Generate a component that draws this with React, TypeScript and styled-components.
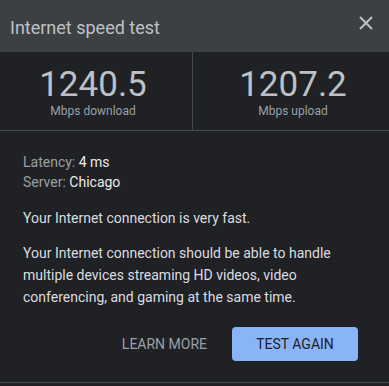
import React from "react";
import styled, { createGlobalStyle } from "styled-components";

const Global = createGlobalStyle`
  html, body {
    margin: 0;
    padding: 0;
    background: #202124;
  }
  body {
    font-family: Roboto, "Noto Sans", Arial, sans-serif;
    -webkit-font-smoothing: antialiased;
  }
`;

const Dialog = styled.div`
  width: 389px;
  background: #202124;
  display: flex;
  flex-direction: column;
  border-bottom: 1px solid #45484c;
`;

const Header = styled.header`
  height: 52px;
  box-sizing: border-box;
  background: #3c4043;
  display: flex;
  align-items: flex-start;
  justify-content: space-between;
  padding: 16px 16px 0 10px;
`;

const Title = styled.h1`
  margin: 0;
  font-size: 18px;
  line-height: 24px;
  font-weight: 400;
  color: #bdc1c6;
`;

const CloseButton = styled.button`
  border: 0;
  background: transparent;
  padding: 0;
  width: 14px;
  height: 14px;
  display: flex;
  cursor: pointer;
  color: #bdc1c6;
`;

const Stats = styled.div`
  display: grid;
  grid-template-columns: 193px 1fr;
  border-bottom: 1px solid #45484c;
`;

const Stat = styled.div<{ $divider?: boolean }>`
  display: flex;
  flex-direction: column;
  align-items: center;
  padding: 15px ${(p) => (p.$divider ? "6px" : "0")} 11px ${(p) => (p.$divider ? "0" : "4px")};
  border-right: ${(p) => (p.$divider ? "1px solid #45484c" : "none")};
`;

const Value = styled.div`
  font-size: 35px;
  line-height: 36px;
  color: #bdc1c6;
  font-weight: 400;
`;

const Unit = styled.div`
  font-size: 12px;
  line-height: 16px;
  color: #9aa0a6;
`;

const Body = styled.div`
  padding: 21px 31px 21px 23px;
  display: flex;
  flex-direction: column;
`;

const Meta = styled.div`
  font-size: 14px;
  line-height: 20px;
  color: #9aa0a6;
`;

const MetaValue = styled.span`
  color: #e8eaed;
`;

const Paragraph = styled.p<{ $top: number }>`
  margin: ${(p) => p.$top}px 0 0;
  font-size: 14px;
  line-height: 22px;
  color: #dadce0;
`;

const Actions = styled.div`
  display: flex;
  justify-content: flex-end;
  align-items: center;
  gap: 25px;
  margin-top: 19px;
`;

const TextButton = styled.button`
  border: 0;
  background: transparent;
  padding: 0;
  font-family: inherit;
  font-size: 14px;
  font-weight: 400;
  text-transform: uppercase;
  color: #9aa0a6;
  cursor: pointer;
`;

const PrimaryButton = styled.button`
  border: 0;
  height: 34px;
  width: 126px;
  border-radius: 4px;
  background: #8ab4f8;
  color: #202124;
  font-family: inherit;
  font-size: 14px;
  font-weight: 400;
  text-transform: uppercase;
  cursor: pointer;
`;

export default function App() {
  return (
    <>
      <Global />
      <Dialog>
        <Header>
          <Title>Internet speed test</Title>
          <CloseButton aria-label="Close">
            <svg width="14" height="14" viewBox="0 0 14 14">
              <path d="M1 1L13 13M13 1L1 13" stroke="currentColor" strokeWidth="2" />
            </svg>
          </CloseButton>
        </Header>
        <Stats>
          <Stat $divider>
            <Value>1240.5</Value>
            <Unit>Mbps download</Unit>
          </Stat>
          <Stat>
            <Value>1207.2</Value>
            <Unit>Mbps upload</Unit>
          </Stat>
        </Stats>
        <Body>
          <Meta>
            Latency: <MetaValue>4 ms</MetaValue>
          </Meta>
          <Meta>
            Server: <MetaValue>Chicago</MetaValue>
          </Meta>
          <Paragraph $top={15}>Your Internet connection is very fast.</Paragraph>
          <Paragraph $top={13}>
            Your Internet connection should be able to handle multiple devices streaming HD
            videos, video conferencing, and gaming at the same time.
          </Paragraph>
          <Actions>
            <TextButton>Learn more</TextButton>
            <PrimaryButton>Test again</PrimaryButton>
          </Actions>
        </Body>
      </Dialog>
    </>
  );
}
